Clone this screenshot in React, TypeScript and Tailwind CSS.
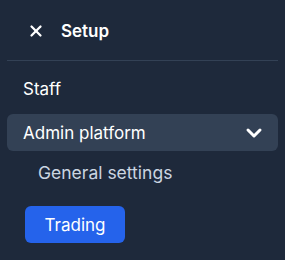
import { X, ChevronDown } from "lucide-react";

export default function App() {
  return (
    <div className="h-[260px] w-[285px] bg-[#1e293b] px-[7px] font-['Inter',sans-serif] text-white">
      {/* Header */}
      <div className="flex h-[61px] items-center gap-4 border-b border-[#334155] pl-5 pt-px">
        <X size={18} strokeWidth={3} className="shrink-0" />
        <span className="text-[17px] font-semibold leading-6">Setup</span>
      </div>

      <nav className="flex flex-col text-[17px] leading-6">
        <div className="mt-4 pl-4">Staff</div>

        <button className="mt-[13px] flex h-[37px] items-center justify-between rounded-md bg-[#334155] pl-4 pr-3 text-left">
          <span>Admin platform</span>
          <ChevronDown size={24} strokeWidth={3} />
        </button>

        <div className="mt-[10px] pl-[31px] text-[17.5px] text-[#cbd5e1]">General settings</div>

        <div className="mt-[21px] pl-[18px]">
          <button className="flex h-[37px] w-[100px] items-center justify-center rounded-md bg-[#2563eb]">
            Trading
          </button>
        </div>
      </nav>
    </div>
  );
}
